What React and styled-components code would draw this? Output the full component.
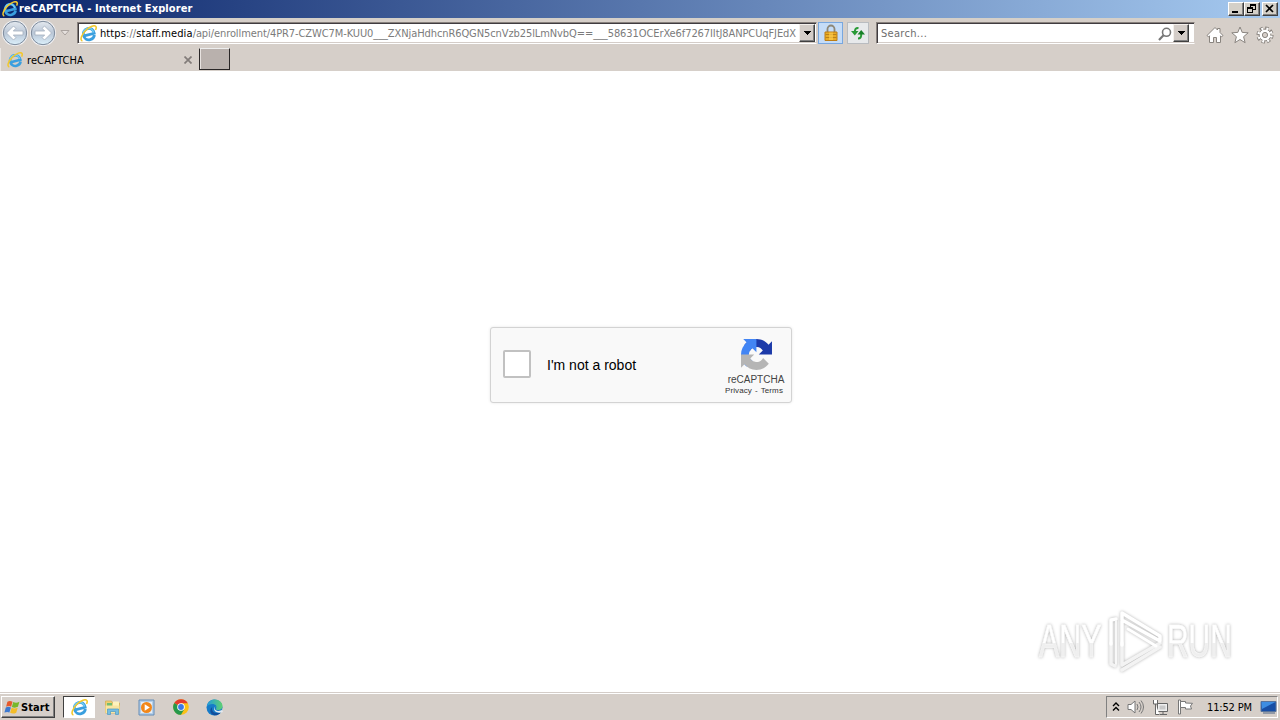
import React from "react";
import styled, { createGlobalStyle } from "styled-components";

const GlobalStyle = createGlobalStyle`
  * {
    box-sizing: border-box;
  }

  body {
    margin: 0;
    overflow: hidden;
    background: #fff;
    font-family: "DejaVu Sans Condensed", "DejaVu Sans", sans-serif;
    font-stretch: condensed;
    font-size: 11px;
    color: #000;
  }

  svg {
    display: block;
    flex: none;
  }
`;

const Screen = styled.div`
  width: 1280px;
  height: 720px;
  display: flex;
  flex-direction: column;
`;

const TitleBar = styled.header`
  height: 18px;
  flex: none;
  display: flex;
  align-items: center;
  padding: 0 2px;
  background: linear-gradient(90deg, #0a246a, #a6caf0);
`;

const TitleText = styled.h1`
  margin: 0 auto 0 1px;
  color: #fff;
  font-size: 11px;
  line-height: 18px;
  font-weight: 700;
  white-space: nowrap;
  letter-spacing: 0.1px;
`;

const WindowButton = styled.button`
  width: 16px;
  height: 14px;
  padding: 0;
  margin-left: ${props => props.gap || 0};
  background: #d4d0c8;
  border: 1px solid;
  border-color: #fff #404040 #404040 #fff;
  box-shadow: inset -1px -1px #808080;
`;

const NavBar = styled.nav`
  height: 30px;
  flex: none;
  display: flex;
  align-items: flex-start;
  padding: 4px 6px 0 1px;
  background: #d6cfc9;
  border-top: 1px solid #d4d0c8;
`;

const NavButtons = styled.div`
  display: flex;
  align-items: center;
  width: 76px;
  flex: none;
  height: 26px;
  margin-top: -3px;
`;

const Field = styled.div`
  height: 22px;
  width: ${props => props.width};
  margin: -1px 0 0 ${props => props.gap || 0};
  flex: none;
  display: flex;
  align-items: center;
  overflow: hidden;
  background: #fff;
  border: 1px solid;
  border-color: #87807c #d6cfc9 #fff #87807c;
  box-shadow: inset 1px 1px #403c40, inset 0 -1px #d4cdc8;
  padding: 1px ${props => props.end} 0 ${props => props.start};
`;

const Address = styled.div`
  width: 697px;
  flex: none;
  margin-left: 3px;
  overflow: hidden;
  white-space: nowrap;
  line-height: 18px;
  color: #7b7b7b;
  letter-spacing: -0.09px;
`;

const Domain = styled.span`
  letter-spacing: 0.1px;

  span {
    color: #000;
  }
`;

const Placeholder = styled.span`
  flex: 1;
  color: #6d6d6d;
  letter-spacing: 0.3px;
`;

const DropButton = styled.button`
  width: 16px;
  height: 18px;
  flex: none;
  padding: 0;
  margin: -1px 0 0 ${props => props.gap};
  display: grid;
  place-items: center;
  background: #d4cdc8;
  border: 1px solid;
  border-color: #f4f0ec #404040 #404040 #f4f0ec;
  box-shadow: inset -1px -1px #808080;
`;

const ToolButton = styled.button`
  width: ${props => props.width};
  height: 22px;
  margin: -1px 0 0 ${props => props.gap};
  padding: 0;
  display: grid;
  place-items: center;
  background: ${props => (props.active ? "#c5dcf7" : "#e7e9eb")};
  border: 1px solid ${props => (props.active ? "#78a7df" : "#b9bcc0")};
`;

const Commands = styled.div`
  display: flex;
  gap: 7px;
  margin: 3px 0 0 11px;
`;

const TabStrip = styled.div`
  height: 23px;
  flex: none;
  display: flex;
  background: #d6cfc9;
`;

const Tab = styled.div`
  width: 199px;
  height: 23px;
  display: flex;
  align-items: center;
  padding: 1px 7px 0 6px;
  border-left: 1px solid #ebe7e4;

  span {
    flex: 1;
    margin-left: 4px;
    letter-spacing: 0.1px;
  }
`;

const NewTab = styled.div`
  width: 31px;
  height: 22px;
  background: #b9b1ad;
  border: 1px solid #292626;
  border-top-color: #eee;
  box-shadow: inset 1px 0 #e8e3e0;
`;

const Page = styled.main`
  flex: 1;
  display: flex;
  justify-content: center;
  align-items: flex-start;
  padding: 256px 0 0 2px;
  position: relative;
  background: #fff;
`;

const Captcha = styled.section`
  width: 302px;
  height: 76px;
  display: flex;
  align-items: center;
  padding-left: 12px;
  background: #f9f9f9;
  border: 1px solid #d3d3d3;
  border-radius: 3px;
  box-shadow: 0 0 3px rgba(0, 0, 0, 0.1);
  font-family: "Liberation Sans", Arial, sans-serif;
`;

const Checkbox = styled.div`
  width: 28px;
  height: 28px;
  margin-top: -2px;
  background: #fff;
  border: 2px solid #c1c1c1;
  border-radius: 2px;
`;

const CaptchaLabel = styled.label`
  flex: 1;
  margin-left: 16px;
  font-size: 14px;
  line-height: 17px;
`;

const Brand = styled.div`
  width: 70px;
  display: flex;
  flex-direction: column;
  align-items: center;
  padding-top: 4px;
  color: #444;
  white-space: nowrap;
`;

const BrandName = styled.div`
  margin-top: 4px;
  font-size: 10px;
  line-height: 11px;
`;

const BrandLinks = styled.div`
  margin: 1px 4px 0 0;
  font-size: 8px;
  line-height: 10px;
  letter-spacing: 0.1px;
  color: #333;

  span {
    margin: 0 3px;
  }
`;

const Watermark = styled.div`
  position: absolute;
  left: 1039px;
  top: 538px;
  display: flex;
  align-items: center;
  filter: drop-shadow(0 0 1.5px rgba(0, 0, 0, 0.3));
`;

const WatermarkWord = styled.span`
  width: ${props => props.width};
  margin-right: ${props => props.pull};
  white-space: nowrap;
  font: 400 46px/60px "Liberation Sans Narrow", "Liberation Sans", sans-serif;
  background: linear-gradient(#fff 54%, #efefef 54%);
  background-clip: text;
  color: transparent;
  transform: scaleX(${props => props.scale});
  transform-origin: left center;
  -webkit-text-stroke: 0.5px #fafafa;
`;

const TaskBar = styled.footer`
  height: 28px;
  flex: none;
  display: flex;
  align-items: center;
  padding: 1px 2px 0 1px;
  background: #d6cfc9;
  border-top: 1px solid #d4cdc8;
  box-shadow: inset 0 1px #fff;
`;

const StartButton = styled.button`
  width: 54px;
  height: 22px;
  display: flex;
  align-items: center;
  padding: 0 0 0 2px;
  background: #d6cfc9;
  border: 1px solid;
  border-color: #fff #404040 #404040 #fff;
  box-shadow: inset -1px -1px #808080;
  font: 700 11px "DejaVu Sans Condensed", sans-serif;
  letter-spacing: 0.1px;
  color: #000;
`;

const TaskItem = styled.div`
  width: ${props => (props.active ? "32px" : "34px")};
  height: 22px;
  margin-left: ${props => (props.active ? "8px" : 0)};
  display: grid;
  place-items: center;
  background: ${props => (props.active ? "#fff" : "none")};
  border: 1px solid transparent;
  border-color: ${props => (props.active ? "#404040 #fff #fff #404040" : "transparent")};
`;

const Tray = styled.div`
  height: 22px;
  width: 172px;
  margin-left: auto;
  display: flex;
  align-items: center;
  gap: 6px;
  padding: 0 0 0 5px;
  border: 1px solid;
  border-color: #808080 #fff #fff #808080;

  svg:nth-of-type(n + 2) {
    margin-left: 1px;
  }

  time {
    flex: 1;
    margin-left: 7px;
    letter-spacing: -0.15px;
    white-space: nowrap;
  }
`;

const IeIcon = ({ size }) => (
  <svg width={size} height={size} viewBox="0 0 16 16">
    <g transform="rotate(-14 8 8.500)">
      <path
        d="M13.200 10.800C12.300 13 10.400 14 8.300 14c-3.100 0-5.200-2.300-5.200-5.300 0-3.100 2.200-5.400 5.200-5.400 3.300 0 5.200 2.300 5.100 5.800H4.500"
        fill="none"
        stroke="#3a9fdf"
        strokeWidth="2.600"
      />
      <path
        d="M13 8.300C12.700 5 10.800 3.200 8.300 3.200 5.700 3.200 3.500 5 3.100 7.800"
        fill="none"
        stroke="#6fcbf4"
        strokeWidth="1.400"
      />
    </g>
    <path
      d="M2.300 15C-.4 14.300 1.300 9 5.600 4.900 9.400 1.200 13.900-.3 15 1.500c.5.800.2 2-.4 3.200"
      fill="none"
      stroke="#f2c82e"
      strokeWidth="1.500"
    />
  </svg>
);

const ArrowButton = ({ flip }) => (
  <svg width="28" height="26" viewBox="0 0 28 26">
    <defs>
      <linearGradient id={flip ? "orbR" : "orbL"} x2="0" y2="1">
        <stop offset="0" stopColor="#e4e9ef" />
        <stop offset=".5" stopColor="#b9c6d6" />
        <stop offset="1" stopColor="#dcf0fb" />
      </linearGradient>
    </defs>
    <circle cx="14" cy="13" r="13" fill="#f1f1f3" />
    <circle
      cx="14"
      cy="13"
      r="11.700"
      fill={flip ? "url(#orbR)" : "url(#orbL)"}
      stroke="#7b899b"
    />
    <path
      d="M5.500 13l7-7 2.400 2.400-2.600 2.600h9.700v4h-9.700l2.600 2.600L12.500 20z"
      transform={flip ? "translate(28 0) scale(-1 1)" : undefined}
      fill="#fff"
      stroke="#a3afbe"
      strokeWidth=".8"
    />
  </svg>
);

const DownArrow = () => (
  <svg width="8" height="4" viewBox="0 0 8 4" shapeRendering="crispEdges">
    <path d="M0 0h8L4 4z" />
  </svg>
);

const LockIcon = () => (
  <svg width="14" height="18" viewBox="0 0 14 18">
    <path d="M3.500 9V5a3.500 3.500 0 0 1 7 0v4" fill="none" stroke="#8d8777" strokeWidth="1.800" />
    <path d="M1 8h12v8.500H1z" fill="#e9ac26" stroke="#bd7d14" />
    <path d="M1.500 10.500h11M1.500 13.500h11" stroke="#bb8219" />
    <path d="M5 8.500h4v7.500H5z" fill="#ffce4e" opacity=".65" />
  </svg>
);

const RefreshIcon = () => (
  <svg width="14" height="14" viewBox="0 0 14 14" fill="none" stroke="#289a36" strokeWidth="2">
    <path d="M7.500 2C4.800 1.800 3.700 3 3.800 7" />
    <path d="M0 5h7.500L3.800 9.500z" fill="#289a36" stroke="none" />
    <path d="M7 12.500c2.500 0 3.400-1.400 3.200-5" />
    <path d="M6.500 8.500H14L10.200 4z" fill="#178029" stroke="none" />
  </svg>
);

const SearchIcon = () => (
  <svg width="14" height="14" viewBox="0 0 14 14" fill="none" stroke="#777">
    <circle cx="8.500" cy="5.300" r="4" strokeWidth="1.600" />
    <path d="M5.500 8.300L1 13" strokeWidth="2.200" />
  </svg>
);

const HomeIcon = () => (
  <svg width="18" height="18" viewBox="0 0 18 18" fill="#fff" stroke="#89847f">
    <path d="M1 9.500L9 1.500l2.500 2.500V2.500h2.500v4l3 3-1.500 1.300-1-1v6.700h-4v-5h-3v5h-4V9.800l-1 1z" />
  </svg>
);

const StarIcon = () => (
  <svg width="18" height="18" viewBox="0 0 18 18" fill="#fff" stroke="#89847f">
    <path d="M9 1l2.200 5.400 6 .4-4.600 3.900 1.500 6L9 13.500l-5.100 3.200 1.500-6L.8 6.800l6-.4z" />
  </svg>
);

const GearIcon = () => (
  <svg width="18" height="18" viewBox="0 0 18 18">
    <circle cx="9" cy="9" r="6.900" fill="none" stroke="#89847f" strokeWidth="3.400" strokeDasharray="3.300 2.120" />
    <circle cx="9" cy="9" r="5.900" fill="#fff" stroke="#89847f" />
    <circle cx="9" cy="9" r="6.500" fill="none" stroke="#fff" strokeWidth="2.400" strokeDasharray="1.900 3.205" strokeDashoffset="-.6" />
    <circle cx="9" cy="9" r="2.600" fill="#d6cfc9" stroke="#89847f" />
  </svg>
);

const RecaptchaLogo = () => (
  <svg width="31" height="31" viewBox="0 0 64 64">
    <path
      d="M64 31.955l-.033-1.370V4.687l-7.160 7.160C50.948 4.674 42.033.093 32.050.093c-10.400 0-19.622 4.960-25.458 12.640l11.736 11.860a15.550 15.550 0 0 1 4.754-5.334c2.050-1.600 4.952-2.906 8.968-2.906.485 0 .86.057 1.135.163 4.976.393 9.288 3.140 11.828 7.124l-8.307 8.307L64 31.953"
      fill="#1c3aa9"
    />
    <path
      d="M31.862.094l-1.370.033H4.594l7.160 7.160C4.580 13.147 0 22.060 0 32.046c0 10.400 4.960 19.622 12.640 25.458L24.500 45.768a15.550 15.550 0 0 1-5.334-4.754c-1.600-2.050-2.906-4.952-2.906-8.968 0-.485.057-.86.163-1.135.393-4.976 3.140-9.288 7.124-11.828l8.307 8.307L31.860.095"
      fill="#4285f4"
    />
    <path
      d="M.001 32.045l.033 1.370v25.898l7.160-7.160c5.860 7.173 14.774 11.754 24.760 11.754 10.400 0 19.622-4.960 25.458-12.640l-11.736-11.860a15.550 15.550 0 0 1-4.754 5.334c-2.050 1.600-4.952 2.906-8.968 2.906-.485 0-.86-.057-1.135-.163-4.976-.393-9.288-3.140-11.828-7.124l8.307-8.307c-10.522.04-22.400.066-27.295-.005"
      fill="#b5b5b5"
    />
  </svg>
);

const PlayMark = () => (
  <svg width="62" height="64" viewBox="0 0 62 64" fill="none" strokeLinejoin="round" strokeLinecap="round">
    <path d="M6 34v21l4 2M17 34v22l38-22M17 61L55 38" stroke="#f3f3f3" strokeWidth="3.500" />
    <path d="M11 10l-5 1v24" stroke="#fff" strokeWidth="3.500" />
    <path d="M17 36V4l38 23v5L17 11" stroke="#fff" strokeWidth="3.500" />
    <path d="M11 12v43" stroke="#f8f8f8" strokeWidth="2" />
    <path d="M23 20l28 17" stroke="#fff" strokeWidth="3" />
  </svg>
);

const WindowsFlag = () => (
  <svg width="17" height="17" viewBox="0 0 16 16">
    <path d="M3.200 2.500C5 1.400 6.500 1.700 8 2.500L6.700 7.200C5.300 6.400 3.800 6.300 2 7.200z" fill="#e65a2c" />
    <path d="M8.700 2.800c1.800.9 3.700.9 5.800-.2l-1.400 4.800c-1.900 1-3.800 1-5.700.1z" fill="#78b82a" />
    <path d="M1.700 8C3.500 7.100 5 7.200 6.500 8l-1.400 4.700C3.700 11.900 2.200 12 .4 12.800z" fill="#3c79d0" />
    <path d="M7.200 8.300c1.900.9 3.700.8 5.700-.1l-1.400 4.700c-2 1.100-3.900 1-5.700.1z" fill="#f4bd28" />
  </svg>
);

const FolderIcon = () => (
  <svg width="18" height="18" viewBox="0 0 18 18">
    <path d="M2.500 15V3h6l1 2h7v10z" fill="#edcf72" stroke="#d1ac4d" strokeWidth=".7" />
    <path d="M4 5h5v3H4z" fill="#72bc72" />
    <path d="M10 3.500h6V8h-6z" fill="#fff3bd" />
    <path d="M2.500 7.500h14V15h-14z" fill="#f9e5a0" />
    <path d="M4.500 16.500V11h11v5.500h-3v-3h-5v3z" fill="#77bde0" stroke="#4b99c4" strokeWidth=".7" />
  </svg>
);

const MediaIcon = () => (
  <svg width="17" height="17" viewBox="0 0 17 17">
    <path d="M1 1h15v15H1z" fill="#b4cfe9" stroke="#648cb6" />
    <path d="M3 3h11v11H3z" fill="#e5eef7" />
    <circle cx="8.500" cy="8.500" r="5.500" fill="#f28719" />
    <path d="M6.700 5.200l5.100 3.300-5.100 3.300z" fill="#fff" />
  </svg>
);

const ChromeIcon = () => (
  <svg width="17" height="16" viewBox="-1 0 17 16">
    <circle cx="8" cy="8" r="7.800" fill="#fbc116" />
    <path d="M8 8L1.200 4.100A7.800 7.800 0 0 1 14.800 4.200H8z" fill="#e33b2e" />
    <path d="M8 8L1.200 4.100A7.800 7.800 0 0 0 8 15.800l3.400-5.900z" fill="#26984b" />
    <circle cx="8" cy="8" r="3.800" fill="#fff" />
    <circle cx="8" cy="8" r="2.900" fill="#3b78e7" />
  </svg>
);

const EdgeIcon = () => (
  <svg width="17" height="17" viewBox="0 0 17 17">
    <defs>
      <linearGradient id="edgeTop" x2="1">
        <stop offset="0" stopColor="#239bdc" />
        <stop offset="1" stopColor="#5ed072" />
      </linearGradient>
    </defs>
    <circle cx="8.500" cy="8.500" r="8" fill="#167bc8" />
    <path d="M.8 7.500C1.700 3 4.700.5 8.700.5c4.500 0 7.800 3 7.800 6.400 0 2.400-1.700 4-4.200 4-2 0-2.700-.7-2.200-1.500C11.300 7.200 9.300 5 6.500 5 4 5 1.700 6 .8 7.500z" fill="url(#edgeTop)" />
    <path d="M6.300 8c-1.500 4 2.500 7.500 8.500 5.500-2.500 3.200-6.800 3.600-9 1.500C3.600 13 4 9.500 6.300 8z" fill="#124e9c" />
    <path d="M9.500 7.500c-1.500 1-.9 4.200 2.500 4.400 2 .1 3.200-.6 4-1.200l1 2.300-2 .4c-4 1-7-1.200-6.800-3.700.1-1 .6-1.800 1.300-2.200z" fill="#e3eaf0" />
  </svg>
);

const SpeakerIcon = () => (
  <svg width="18" height="16" viewBox="0 0 18 16" fill="none" stroke="#777">
    <path d="M1 5.500h3L8 2v12l-4-3.500H1z" fill="#fff" />
    <path d="M10 5q2 3 0 6M12 3q4 5 0 10M14 1.500q5 6.500 0 13" />
  </svg>
);

const NetworkIcon = () => (
  <svg width="18" height="17" viewBox="0 0 18 17" fill="#eee" stroke="#666">
    <path d="M5.500 4.500h10v8h-10zM8 15.500h7M11 12.500v3" />
    <path d="M1.500 1v4h4V1M3.500 5v10.500h4" fill="#fff" />
    <path d="M7.500 6.500h6v4h-6z" fill="#c8c8c8" stroke="none" />
  </svg>
);

const FlagIcon = () => (
  <svg width="17" height="16" viewBox="0 0 17 16" fill="#fff" stroke="#777">
    <path d="M1.500 1h2v14h-2z" />
    <path d="M3.500 2.500h5v1.500l7 .3-2 2.700 1 3h-6V8.500h-5z" />
  </svg>
);

const DesktopIcon = () => (
  <svg width="17" height="15" viewBox="0 0 17 15">
    <path d="M1 1.500h15v10H1z" fill="#174ea5" stroke="#59749c" />
    <path d="M1.500 2h14L2 9z" fill="#3d8de2" />
    <path d="M3 13h12" stroke="#4d6584" />
  </svg>
);

function Browser() {
  return (
    <>
      <TitleBar>
        <IeIcon size={16} />
        <TitleText>reCAPTCHA - Internet Explorer</TitleText>
        <WindowButton aria-label="Minimize">
          <svg width="14" height="12" shapeRendering="crispEdges">
            <path d="M3 8h6v2H3z" />
          </svg>
        </WindowButton>
        <WindowButton aria-label="Restore">
          <svg width="14" height="12" fill="none" stroke="#000" shapeRendering="crispEdges">
            <path d="M5.500 4V1.500h5v5H8M5 2.500h6M2.500 4.500h5v5h-5zM2 5.500h6" />
          </svg>
        </WindowButton>
        <WindowButton aria-label="Close" gap="2px">
          <svg width="14" height="12" stroke="#000" strokeWidth="1.700">
            <path d="M3 2l7 7M10 2L3 9" />
          </svg>
        </WindowButton>
      </TitleBar>
      <NavBar>
        <NavButtons>
          <ArrowButton />
          <ArrowButton flip />
          <svg width="14" height="8" viewBox="0 0 14 8">
            <path d="M4 1.500h8L8 6z" fill="#e6e1de" stroke="#aaa39f" />
          </svg>
        </NavButtons>
        <Field width="740px" start="2px" end="0">
          <IeIcon size={17} />
          <Address>
            <Domain>
              <span>https</span>://<span>staff.media</span>
            </Domain>
            /api/enrollment/4PR7-CZWC7M-KUU0___ZXNjaHdhcnR6QGN5cnVzb25lLmNvbQ==___58631OCErXe6f7267IItJ8ANPCUqFJEdX
          </Address>
          <DropButton gap="2px" aria-label="Show addresses">
            <DownArrow />
          </DropButton>
        </Field>
        <ToolButton width="26px" gap="1px" active aria-label="Security report">
          <LockIcon />
        </ToolButton>
        <ToolButton width="22px" gap="4px" aria-label="Refresh">
          <RefreshIcon />
        </ToolButton>
        <Field width="319px" start="4px" end="5px" gap="7px">
          <Placeholder>Search...</Placeholder>
          <SearchIcon />
          <DropButton gap="1px" aria-label="Search options">
            <DownArrow />
          </DropButton>
        </Field>
        <Commands>
          <HomeIcon />
          <StarIcon />
          <GearIcon />
        </Commands>
      </NavBar>
      <TabStrip>
        <Tab>
          <IeIcon size={16} />
          <span>reCAPTCHA</span>
          <svg width="8" height="8" stroke="#827c79" strokeWidth="1.700">
            <path d="M.5.5l7 7M7.500.5l-7 7" />
          </svg>
        </Tab>
        <NewTab />
      </TabStrip>
    </>
  );
}

function CaptchaBox() {
  return (
    <Captcha>
      <Checkbox />
      <CaptchaLabel>I'm not a robot</CaptchaLabel>
      <Brand>
        <RecaptchaLogo />
        <BrandName>reCAPTCHA</BrandName>
        <BrandLinks>
          Privacy<span>-</span>Terms
        </BrandLinks>
      </Brand>
    </Captcha>
  );
}

function App() {
  return (
    <Screen>
      <GlobalStyle />
      <Browser />
      <Page>
        <CaptchaBox />
        <Watermark>
          <WatermarkWord width="102px" pull="-36px" scale="0.66">
            ANY
          </WatermarkWord>
          <PlayMark />
          <WatermarkWord width="102px" pull="-35px" scale="0.65">
            RUN
          </WatermarkWord>
        </Watermark>
      </Page>
      <TaskBar>
        <StartButton>
          <WindowsFlag />
          Start
        </StartButton>
        <TaskItem active>
          <IeIcon size={17} />
        </TaskItem>
        <TaskItem>
          <FolderIcon />
        </TaskItem>
        <TaskItem>
          <MediaIcon />
        </TaskItem>
        <TaskItem>
          <ChromeIcon />
        </TaskItem>
        <TaskItem>
          <EdgeIcon />
        </TaskItem>
        <Tray>
          <svg width="8" height="10" fill="none" stroke="#000" strokeWidth="1.400">
            <path d="M1 4l3-3 3 3M1 8.500l3-3 3 3" />
          </svg>
          <SpeakerIcon />
          <NetworkIcon />
          <FlagIcon />
          <time>11:52 PM</time>
          <DesktopIcon />
        </Tray>
      </TaskBar>
    </Screen>
  );
}

export default App;
